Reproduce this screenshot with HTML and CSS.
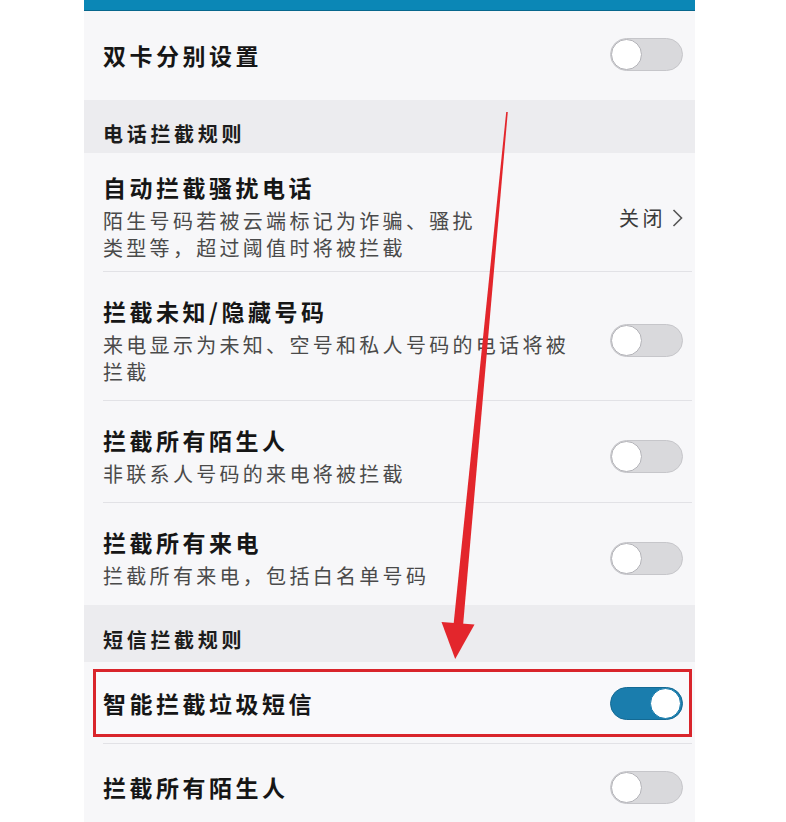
FILE: index.html
```html
<!DOCTYPE html>
<html lang="zh-CN">
<head>
<meta charset="utf-8">
<title>骚扰拦截设置</title>
<link rel="stylesheet" href="styles.css">
</head>
<body>
<div class="phone">
  <div class="topbar"></div>

  <div class="row single">
    <span class="title">双卡分别设置</span>
    <span class="switch"></span>
  </div>

  <div class="header">电话拦截规则</div>

  <div class="row tight">
    <div class="text">
      <div class="title">自动拦截骚扰电话</div>
      <div class="sub">陌生号码若被云端标记为诈骗、骚扰<br>类型等，超过阈值时将被拦截</div>
    </div>
    <div class="value">关闭<svg class="chev" width="11" height="20" viewBox="0 0 11 20"><path d="M1.5 2 L9.5 10 L1.5 18" fill="none" stroke="#555" stroke-width="1.6"/></svg></div>
  </div>

  <div class="row">
    <div class="text">
      <div class="title">拦截未知/隐藏号码</div>
      <div class="sub">来电显示为未知、空号和私人号码的电话将被<br>拦截</div>
    </div>
    <span class="switch"></span>
  </div>

  <div class="row">
    <div class="text">
      <div class="title">拦截所有陌生人</div>
      <div class="sub">非联系人号码的来电将被拦截</div>
    </div>
    <span class="switch"></span>
  </div>

  <div class="row nb">
    <div class="text">
      <div class="title">拦截所有来电</div>
      <div class="sub">拦截所有来电，包括白名单号码</div>
    </div>
    <span class="switch"></span>
  </div>

  <div class="header h2">短信拦截规则</div>

  <div class="row highlight">
    <span class="title">智能拦截垃圾短信</span>
    <span class="switch on"></span>
  </div>

  <div class="row single last">
    <span class="title">拦截所有陌生人</span>
    <span class="switch"></span>
  </div>
</div>

<svg class="arrow" width="786" height="822" viewBox="0 0 786 822">
  <path d="M506.2 112 L507.8 112 L463 626 L453.4 626 Z" fill="#e3262c"/>
  <path d="M441.5 622 L474.5 624.5 L455.2 659 Z" fill="#e3262c"/>
</svg>
</body>
</html>
```

FILE: styles.css
```css
html, body {
  margin: 0;
  padding: 0;
}

body {
  background: #ffffff;
  width: 786px;
  height: 822px;
  overflow: hidden;
  position: relative;
  font-family: "Noto Sans CJK SC", "Noto Sans", "Liberation Sans", sans-serif;
  color: #151515;
}

.phone {
  margin-left: 84px;
  width: 611px;
  height: 822px;
  background: #f7f7f9;
  overflow: hidden;
}

.topbar {
  height: 10px;
  background: #0b87b6;
  border-bottom: 1px solid #07678d;
}

.row {
  display: flex;
  align-items: center;
  justify-content: space-between;
  margin-left: 19px;
  margin-right: 3px;
  padding: 24px 9px 15px 0;
  border-bottom: 1px solid #e2e2e6;
}

.row.tight {
  padding-top: 19px;
  padding-bottom: 10px;
}

.row.nb {
  border-bottom: none;
  padding-bottom: 16px;
}

.row.single {
  height: 89px;
  box-sizing: border-box;
  padding-top: 0;
  padding-bottom: 2px;
  border-bottom: none;
}

.row.last {
  border-top: 1px solid #e2e2e6;
  margin-top: 6px;
}

.row.highlight {
  margin-top: 7px;
  margin-left: 9px;
  height: 68px;
  box-sizing: border-box;
  padding: 0 6px 0 7px;
  border: 3px solid #d9252b;
  background: #f9f9fb;
}

.title {
  font-size: 23px;
  line-height: 30px;
  letter-spacing: 3.5px;
  font-weight: 700;
  white-space: nowrap;
  color: #161616;
}

.sub {
  margin-top: 5px;
  font-size: 20px;
  line-height: 27px;
  letter-spacing: 3.3px;
  color: #4a4a4a;
  white-space: nowrap;
}

.header {
  background: #ececef;
  padding: 20px 0 5px 19px;
  font-size: 20px;
  line-height: 28px;
  letter-spacing: 3.7px;
  font-weight: 700;
  color: #1c1c1c;
}

.header.h2 {
  padding-top: 21px;
  padding-bottom: 8px;
}

.value {
  display: flex;
  align-items: center;
  gap: 6px;
  font-size: 20px;
  letter-spacing: 3.5px;
  color: #3a3a3a;
  margin-top: 2px;
}

.chev {
  display: block;
}

.switch {
  flex: none;
  display: flex;
  align-items: center;
  justify-content: flex-start;
  width: 73px;
  height: 33px;
  box-sizing: border-box;
  border-radius: 17px;
  background: #d9d9dc;
  border: 1px solid #c6c6ca;
}

.switch::before {
  content: "";
  display: block;
  width: 31px;
  height: 31px;
  box-sizing: border-box;
  border-radius: 50%;
  background: #ffffff;
  border: 1.5px solid #b3b3b8;
}

.switch.on {
  background: #1a7dad;
  border-color: #146a94;
  justify-content: flex-end;
}

.switch.on::before {
  border-color: #1a7dad;
  margin-right: 1px;
}

.arrow {
  position: absolute;
  top: 0;
  left: 0;
  pointer-events: none;
}
```
